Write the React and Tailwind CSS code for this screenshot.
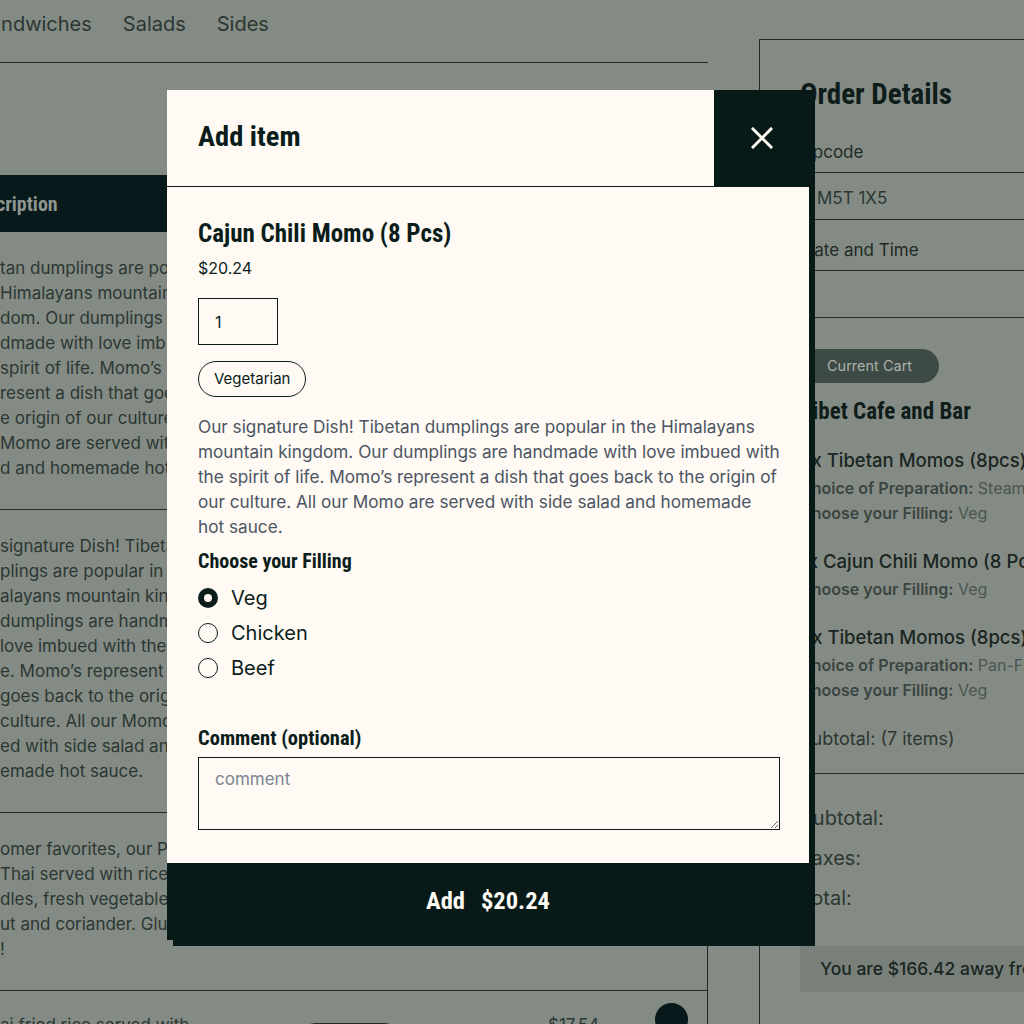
import React from 'react';

const cond = { fontFamily: '"Roboto Condensed", "Open Sans Condensed", Roboto, "Open Sans", sans-serif', fontStretch: 'condensed' };
const sans = { fontFamily: 'Inter, "Liberation Sans", sans-serif' };

const row1 = [
    'tan dumplings are popular in the',
    'Himalayans mountain king',
    'dom. Our dumplings are han',
    'dmade with love imbued with the',
    'spirit of life. Momo’s rep',
    'resent a dish that goes back to th',
    'e origin of our culture. All our',
    'Momo are served with side sala',
    'd and homemade hot sauce.',
];

const row2 = [
    'signature Dish! Tibetan',
    'plings are popular in the',
    'alayans mountain kingdom.',
    'dumplings are handmade',
    'love imbued with the spirit',
    'e. Momo’s represent a dish',
    'goes back to the origin of',
    'culture. All our Momo are',
    'ed with side salad and',
    'emade hot sauce.',
];

const row3 = [
    'omer favorites, our Pad',
    'Thai served with rice noo',
    'dles, fresh vegetables, pean',
    'ut and coriander. Gluten free',
    '!',
];

const descLines = [
    'Our signature Dish! Tibetan dumplings are popular in the Himalayans',
    'mountain kingdom. Our dumplings are handmade with love imbued with',
    'the spirit of life. Momo’s represent a dish that goes back to the origin of',
    'our culture. All our Momo are served with side salad and homemade',
    'hot sauce.',
];

const cartItems = [
    { name: '2x Tibetan Momos (8pcs)', opts: [['Choice of Preparation:', 'Steamed'], ['Choose your Filling:', 'Veg']] },
    { name: '1x Cajun Chili Momo (8 Pcs)', opts: [['Choose your Filling:', 'Veg']] },
    { name: '4x Tibetan Momos (8pcs)', opts: [['Choice of Preparation:', 'Pan-Fried'], ['Choose your Filling:', 'Veg']] },
];

function DescRow({ lines }) {
    return (
        <div className="border-b border-[#1e2b27] pt-[24px] pb-[28px]">
            {lines.map((l, i) => (
                <div key={i} className="whitespace-nowrap text-[17px] leading-[25px] text-[#2b3733]">{l}</div>
            ))}
        </div>
    );
}

function Radio({ label, checked }) {
    return (
        <label className="flex items-center gap-[13px] h-[35px]">
            {checked ? (
                <span className="w-[20px] h-[20px] rounded-full bg-[#0b1d1b] flex items-center justify-center">
                    <span className="w-[8px] h-[8px] rounded-full bg-[#fffaf3]" />
                </span>
            ) : (
                <span className="w-[20px] h-[20px] rounded-full border-[1.5px] border-[#0b1d1b]" />
            )}
            <span className="text-[20px] text-[#0b1d1b]">{label}</span>
        </label>
    );
}

export default function App() {
    return (
        <div className="relative w-[1024px] h-[1024px] overflow-hidden bg-[#848b84] text-[#1d2a26]" style={sans}>
            {/* page behind the dialog */}
            <div className="flex">
                <div className="w-[708px] shrink-0">
                    <div className="h-[63px] border-b border-[#1e2b27] flex gap-[31px] pt-[10px] -ml-[23px]">
                        <span className="text-[20px] leading-[28px] text-[#2b3733]">Sandwiches</span>
                        <span className="text-[20px] leading-[28px] text-[#2b3733]">Salads</span>
                        <span className="text-[20px] leading-[28px] text-[#2b3733]">Sides</span>
                    </div>
                    <div className="h-[112px]" />
                    <div className="border-r border-[#1e2b27]">
                        <div className="h-[57px] bg-[#07191a] flex items-center">
                            <span className="-ml-[34px] text-[20px] font-bold text-[#8d9590]" style={cond}>Description</span>
                        </div>
                        <DescRow lines={row1} />
                        <DescRow lines={row2} />
                        <DescRow lines={row3} />
                        <div className="flex items-start pt-[22px] h-[60px]">
                            <div className="w-[300px] whitespace-nowrap text-[17px] leading-[25px] text-[#2b3733]">ai fried rice served with</div>
                            <div className="w-[248px] pt-[10px]">
                                <span className="inline-block w-[100px] h-[30px] rounded-full border-[1.5px] border-[#1e2b27]" />
                            </div>
                            <div className="w-[107px] text-[17px] leading-[25px] text-[#2b3733]">$17.54</div>
                            <div className="w-[33px] h-[33px] -mt-[10px] rounded-full bg-[#07191a]" />
                        </div>
                    </div>
                </div>

                <div className="ml-[51px] mt-[39px] w-[300px] shrink-0 border border-[#1e2b27]">
                    <div className="pl-[40px] pt-[38px]">
                        <div className="text-[29px] leading-[32px] font-bold text-[#0f1d1a]" style={cond}>Order Details</div>
                    </div>
                    <div className="h-[63px] border-b border-[#1e2b27] pl-[38px] flex items-end pb-[8px]">
                        <span className="text-[17px] leading-[24px] text-[#1d2a26]">Zipcode</span>
                    </div>
                    <div className="h-[47px] border-b border-[#1e2b27] pl-[57px] flex items-center pt-[3px]">
                        <span className="text-[17px] leading-[24px] text-[#2b3733]">M5T 1X5</span>
                    </div>
                    <div className="h-[51px] border-b border-[#1e2b27] pl-[42px] flex items-end pb-[8px]">
                        <span className="text-[17px] leading-[24px] text-[#1d2a26]">Date and Time</span>
                    </div>
                    <div className="h-[47px] border-b border-[#1e2b27]" />
                    <div className="pl-[40px] pt-[31px]">
                        <span className="inline-flex items-center h-[34px] px-[27px] rounded-full bg-[#3e4a45] text-[14.5px] text-[#a9b1ac]">Current Cart</span>
                        <div className="mt-[15px] text-[23px] leading-[28px] font-bold text-[#0f1d1a]" style={cond}>Tibet Cafe and Bar</div>
                        {cartItems.map((it, i) => (
                            <div key={i} className={i === 0 ? 'mt-[22px]' : 'mt-[23px]'}>
                                <div className="whitespace-nowrap text-[18.5px] leading-[24px] font-medium text-[#1a2622]">{it.name}</div>
                                <div className="mt-[4px]">
                                    {it.opts.map(([k, v], j) => (
                                        <div key={j} className="whitespace-nowrap text-[16px] leading-[25px] text-[#4a5550]">
                                            <span className="font-semibold text-[#3a4541]">{k}</span> {v}
                                        </div>
                                    ))}
                                </div>
                            </div>
                        ))}
                    </div>
                    <div className="pl-[40px] pt-[24px] pb-[22px] border-b border-[#1e2b27]">
                        <div className="text-[18px] leading-[24px] text-[#2b3733]">Subtotal: (7 items)</div>
                    </div>
                    <div className="pl-[40px] pt-[30px] flex flex-col gap-[12px]">
                        <div className="text-[20px] leading-[28px] text-[#2b3733]">Subtotal:</div>
                        <div className="text-[20px] leading-[28px] text-[#2b3733]">Taxes:</div>
                        <div className="text-[20px] leading-[28px] text-[#2b3733]">Total:</div>
                    </div>
                    <div className="pl-[40px] mt-[34px]">
                        <div className="h-[46px] bg-[#798079] pl-[20px] flex items-center whitespace-nowrap text-[17.5px] font-medium text-[#1a2622]">
                            You are $166.42 away from free delivery
                        </div>
                    </div>
                </div>
            </div>

            {/* dialog */}
            <div className="absolute left-[167px] top-[90px] w-[642px] h-[850px] bg-[#fffaf3] flex flex-col text-[#0b1d1b] shadow-[6px_6px_0_#081a17]">
                <div className="relative h-[97px] shrink-0 border-b border-[#0b1d1b] flex items-center pl-[31px]">
                    <h2 className="text-[28.5px] font-bold leading-[32px] -mt-[2px]" style={cond}>Add item</h2>
                    <button className="absolute top-0 -right-[6px] w-[101px] h-[96px] bg-[#081a17] flex items-center justify-center pr-[6px]">
                        <svg width="22" height="22" viewBox="0 0 22 22" stroke="#fffaf3" strokeWidth="3" strokeLinecap="square">
                            <path d="M2 2 L20 20 M20 2 L2 20" />
                        </svg>
                    </button>
                </div>

                <div className="flex-1 pl-[31px] pr-[30px] pt-[32px]">
                    <h3 className="text-[25px] font-bold leading-[30px]" style={cond}>Cajun Chili Momo (8 Pcs)</h3>
                    <div className="mt-[9px] text-[16px] leading-[20px]">$20.24</div>
                    <div className="mt-[20px] w-[80px] h-[47px] border-[1.5px] border-[#0b1d1b] flex items-center pl-[16px] text-[16px]">1</div>
                    <div className="mt-[16px]">
                        <span className="inline-flex items-center h-[36px] px-[15px] rounded-full border-[1.5px] border-[#0b1d1b] text-[15px]">Vegetarian</span>
                    </div>
                    <p className="mt-[17px] text-[17.2px] leading-[25px] text-[#4b5563]">
                        {descLines.map((l, i) => (
                            <span key={i} className="block whitespace-nowrap">{l}</span>
                        ))}
                    </p>
                    <div className="mt-[10px] text-[20px] font-bold leading-[24px]" style={cond}>Choose your Filling</div>
                    <div className="mt-[7px] flex flex-col">
                        <Radio label="Veg" checked />
                        <Radio label="Chicken" />
                        <Radio label="Beef" />
                    </div>
                    <div className="mt-[41px] text-[20.5px] font-bold leading-[24px]" style={cond}>Comment (optional)</div>
                    <textarea
                        placeholder="comment"
                        className="mt-[7px] block w-[582px] h-[73px] border-[1.5px] border-[#0b1d1b] bg-transparent px-[16px] py-[9px] text-[17px] placeholder:text-[#7b8595] outline-none"
                        style={sans}
                    />
                </div>

                <button className="h-[77px] shrink-0 bg-[#081a17] text-[#fffaf3] text-[24.5px] font-bold flex items-center justify-center gap-[16px]" style={cond}>
                    <span>Add</span>
                    <span>$20.24</span>
                </button>
            </div>
        </div>
    );
}
